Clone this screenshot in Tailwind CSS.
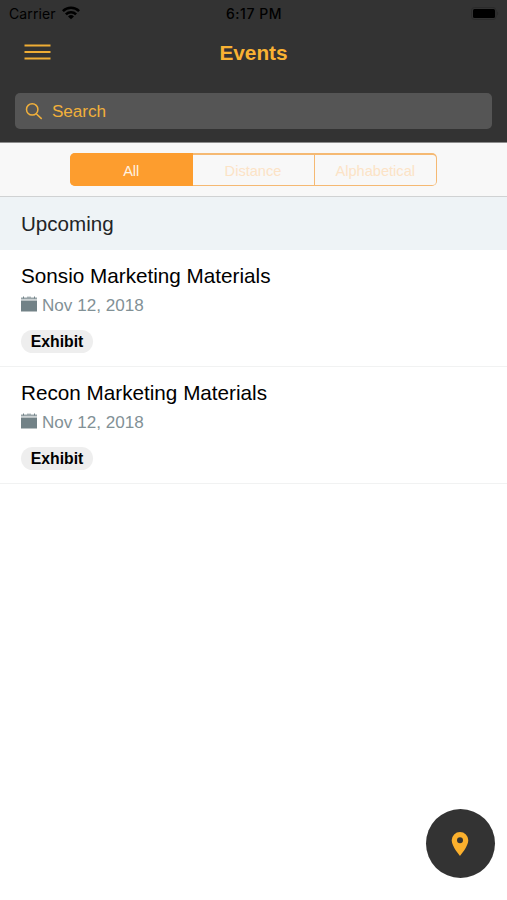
<!DOCTYPE html>
<html lang="en">
<head>
<meta charset="utf-8">
<meta name="viewport" content="width=device-width, initial-scale=1">
<title>Events</title>
<script src="https://cdn.jsdelivr.net/npm/@tailwindcss/browser@4"></script>
</head>
<body class="relative h-[900px] overflow-hidden bg-white font-['Liberation_Sans',Arial,sans-serif] text-black">
<header class="h-[142px] bg-[#333333]">
  <div class="grid h-7 grid-cols-3 items-center pl-[9px] pr-2 font-['Inter',sans-serif] text-[14px] leading-[28px]">
    <div class="flex items-center gap-[6px]">
      <span class="tracking-[0.1px]">Carrier</span>
      <svg class="-mt-0.5 h-[14px] w-[18px]" viewBox="0 0 18 14" fill="none" stroke="#000" stroke-width="2.6"><path d="M.9 5.1a11.6 11.6 0 0 1 16.2 0M3.9 8.4a7.3 7.3 0 0 1 10.2 0"/><path d="M9 13.3 6 10.4a4.3 4.3 0 0 1 6 0Z" fill="#000" stroke="none"/></svg>
    </div>
    <span class="text-center font-medium tracking-[0.5px]">6:17 PM</span>
    <svg class="-mt-px h-[13px] w-[28px] justify-self-end" viewBox="0 0 28 13"><rect x=".5" y=".5" width="24.5" height="12" rx="3" fill="none" stroke="#2b2b2b"/><rect x="2" y="2" width="22" height="9" rx="1.5" fill="#000"/><path d="M26 4.5c1.7.7 1.7 3.3 0 4Z" fill="#2b2b2b"/></svg>
  </div>
  <div class="grid h-[50px] grid-cols-3 items-center pl-6 pr-6 text-[#f9b233]">
    <svg class="-mt-0.5 h-[18px] w-[27px]" viewBox="0 0 27 18" stroke="#efad35" stroke-width="2"><path d="M.5 2.5h26M.5 9h26M.5 15.5h26"/></svg>
    <h1 class="text-center text-[20.8px] leading-6 font-bold">Events</h1>
  </div>
  <div class="mx-[15px] mt-[15px] flex h-[36px] items-center rounded-[5px] bg-[#555555] pl-[10px] text-[#f1b03b]">
    <svg class="h-[18px] w-[18px]" viewBox="0 0 18 18" fill="none" stroke="currentColor" stroke-width="1.5"><circle cx="7.2" cy="7.4" r="5.7"/><path d="m11.2 11.7 5.5 5.2"/></svg>
    <span class="ml-[9px] pt-px text-[17.2px] tracking-[-0.1px]">Search</span>
  </div>
</header>
<nav class="flex h-[55px] justify-center border-t border-b border-t-[#8d8d8d] border-b-[#d0d2d3] bg-[#f8f8f8] pt-[10px]">
  <div class="flex h-[33px] w-[367px] rounded-[5px] bg-[#f5b973] p-[1.5px] text-center text-[14.6px] leading-[32px] text-[#fce3c6]">
    <div class="-my-[1.5px] -ml-[1.5px] w-[122.5px] rounded-l-[5px] bg-[#fd9d2e] pt-[1.5px] text-[#fff3e2]">All</div>
    <div class="w-[121px] bg-[#f8f8f8]">Distance</div>
    <div class="ml-[1.5px] flex-1 rounded-r-[3.5px] bg-[#f8f8f8]">Alphabetical</div>
  </div>
</nav>
<main>
  <h2 class="h-[53px] bg-[#eef3f6] pl-[21px] text-[20.6px] leading-[54px] text-[#222426]">Upcoming</h2>
  <article class="h-[117px] border-b border-[#f1f2f2] pt-[14px] pl-[21px]">
    <h3 class="text-[20.7px] leading-6">Sonsio Marketing Materials</h3>
    <div class="mt-[7px] flex h-[22px] items-center gap-[5px] text-[17.1px] text-[#829196]">
      <svg class="-mt-[4px] h-4 w-4" viewBox="0 0 16 16" fill="#728287"><path d="M0 4.5h16v11H0z"/><path fill="#98a4a8" d="M0 1.5h16v2H0z"/><path d="M2 .5h1v2H2zM6 .7h4v.8H6zM13 .5h1v2h-1z"/></svg>
      <span>Nov 12, 2018</span>
    </div>
    <span class="mt-[13px] flex h-[23px] w-[72px] items-center justify-center rounded-full bg-[#eeeeee] text-[15.8px] font-bold">Exhibit</span>
  </article>
  <article class="h-[117px] border-b border-[#f1f2f2] pt-[14px] pl-[21px]">
    <h3 class="text-[20.7px] leading-6">Recon Marketing Materials</h3>
    <div class="mt-[7px] flex h-[22px] items-center gap-[5px] text-[17.1px] text-[#829196]">
      <svg class="-mt-[4px] h-4 w-4" viewBox="0 0 16 16" fill="#728287"><path d="M0 4.5h16v11H0z"/><path fill="#98a4a8" d="M0 1.5h16v2H0z"/><path d="M2 .5h1v2H2zM6 .7h4v.8H6zM13 .5h1v2h-1z"/></svg>
      <span>Nov 12, 2018</span>
    </div>
    <span class="mt-[13px] flex h-[23px] w-[72px] items-center justify-center rounded-full bg-[#eeeeee] text-[15.8px] font-bold">Exhibit</span>
  </article>
</main>
<button aria-label="Show map" class="absolute right-[12px] bottom-[22px] flex h-[69px] w-[69px] items-center justify-center rounded-full bg-[#333333]">
  <svg class="-ml-px h-6 w-[18px]" viewBox="0 0 18 24"><path fill="#fbb02d" fill-rule="evenodd" d="M9 0a8.3 8.3 0 0 0-8.3 8.3C.7 14.5 9 24 9 24s8.3-9.5 8.3-15.7A8.3 8.3 0 0 0 9 0Zm0 5.3a3 3 0 1 1 0 6 3 3 0 0 1 0-6Z"/></svg>
</button>
</body>
</html>
